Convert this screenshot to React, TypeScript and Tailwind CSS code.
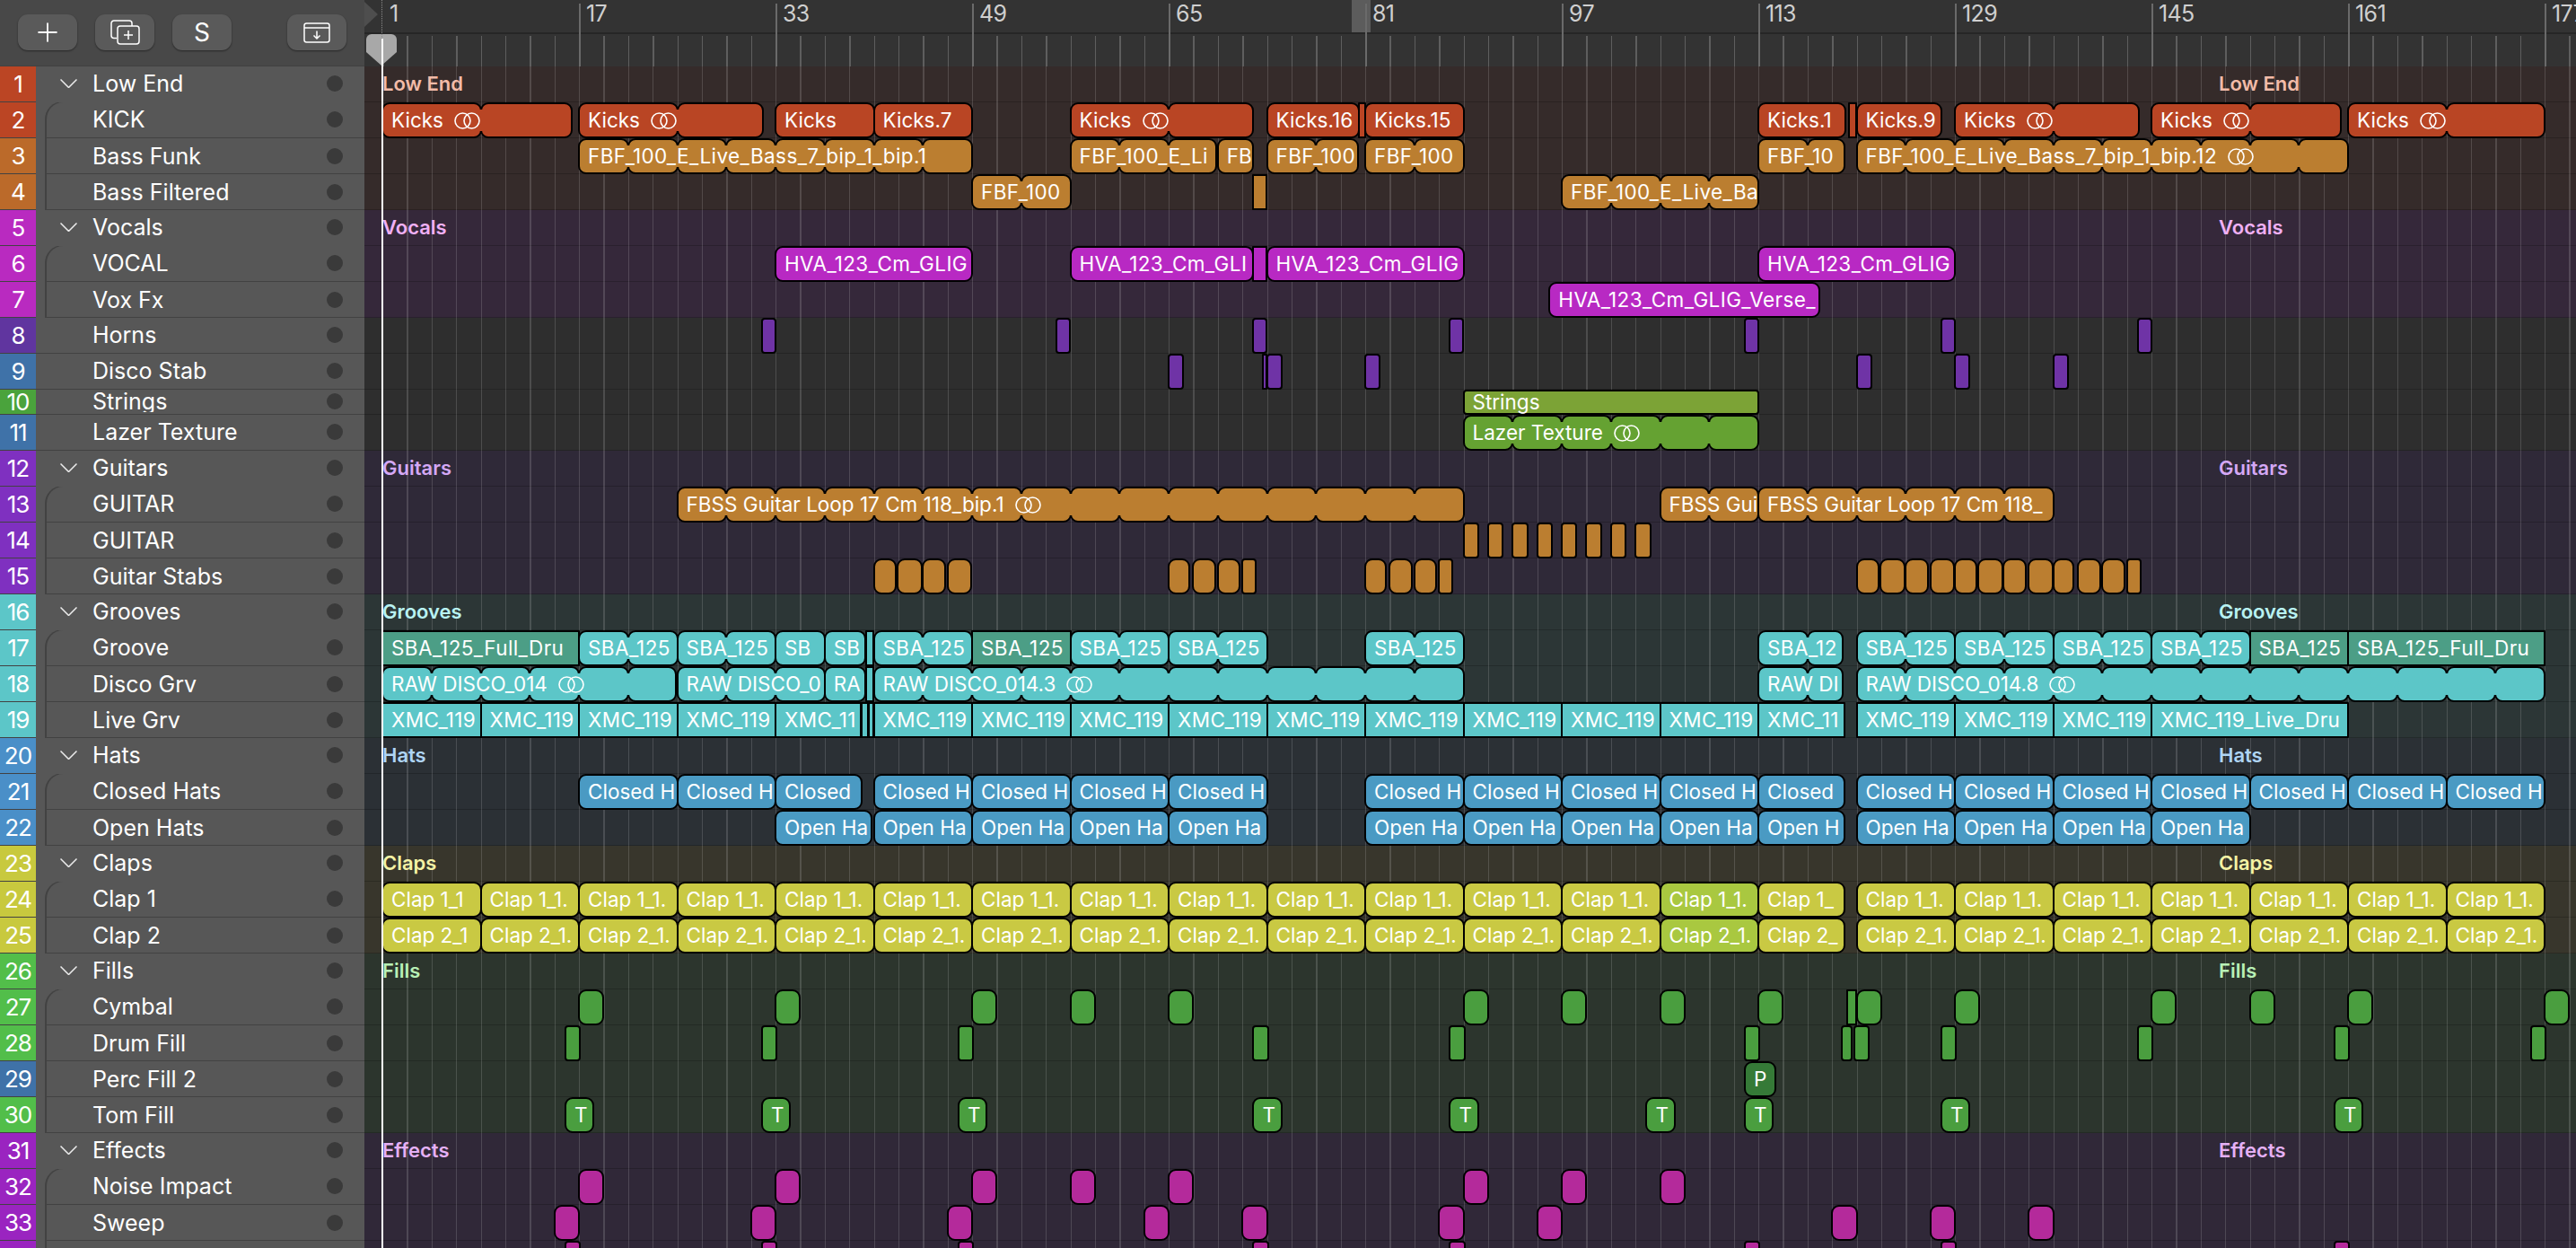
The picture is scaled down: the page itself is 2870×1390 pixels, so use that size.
import React from 'react'
import { Plus } from 'lucide-react'

const STEP = 27.375
// arrange area starts at x=406, bar 1 sits 20px in
const gx = (g: number) => 20 + g * STEP

type Kind = 'folder' | 'first' | 'child' | 'plain'
type Track = { n: number; name: string; cell: string; kind: Kind; bg: string; tint?: string; h?: string }

const LOW = 'bg-[#352b2a]'
const VOX = 'bg-[#35283a]'
const NEU = 'bg-[#2e2e2e]'
const GTR = 'bg-[#2f2938]'
const GRV = 'bg-[#2c3636]'
const HAT = 'bg-[#2b3035]'
const CLP = 'bg-[#38362c]'
const FIL = 'bg-[#2c352d]'
const FX = 'bg-[#302838]'

const tracks: Track[] = [
  { n: 1, name: 'Low End', cell: 'bg-[#bb4524]', kind: 'folder', bg: LOW, tint: 'text-[#f2bba8]' },
  { n: 2, name: 'KICK', cell: 'bg-[#bb4524]', kind: 'first', bg: LOW },
  { n: 3, name: 'Bass Funk', cell: 'bg-[#bb6a2a]', kind: 'child', bg: LOW },
  { n: 4, name: 'Bass Filtered', cell: 'bg-[#bb6a2a]', kind: 'child', bg: LOW },
  { n: 5, name: 'Vocals', cell: 'bg-[#b92ac0]', kind: 'folder', bg: VOX, tint: 'text-[#f0b0f5]' },
  { n: 6, name: 'VOCAL', cell: 'bg-[#b92ac0]', kind: 'first', bg: VOX },
  { n: 7, name: 'Vox Fx', cell: 'bg-[#b92ac0]', kind: 'child', bg: VOX },
  { n: 8, name: 'Horns', cell: 'bg-[#60359f]', kind: 'plain', bg: NEU },
  { n: 9, name: 'Disco Stab', cell: 'bg-[#3f72a8]', kind: 'plain', bg: NEU },
  { n: 10, name: 'Strings', cell: 'bg-[#4aa33c]', kind: 'plain', bg: NEU, h: 'h-[28px]' },
  { n: 11, name: 'Lazer Texture', cell: 'bg-[#3f72a8]', kind: 'plain', bg: NEU },
  { n: 12, name: 'Guitars', cell: 'bg-[#7f30c0]', kind: 'folder', bg: GTR, tint: 'text-[#d4a8f5]' },
  { n: 13, name: 'GUITAR', cell: 'bg-[#7f30c0]', kind: 'first', bg: GTR },
  { n: 14, name: 'GUITAR', cell: 'bg-[#7f30c0]', kind: 'child', bg: GTR },
  { n: 15, name: 'Guitar Stabs', cell: 'bg-[#7f30c0]', kind: 'child', bg: GTR },
  { n: 16, name: 'Grooves', cell: 'bg-[#5cc6c8]', kind: 'folder', bg: GRV, tint: 'text-[#b8f2f2]' },
  { n: 17, name: 'Groove', cell: 'bg-[#5cc6c8]', kind: 'first', bg: GRV },
  { n: 18, name: 'Disco Grv', cell: 'bg-[#5cc6c8]', kind: 'child', bg: GRV },
  { n: 19, name: 'Live Grv', cell: 'bg-[#5cc6c8]', kind: 'child', bg: GRV },
  { n: 20, name: 'Hats', cell: 'bg-[#4a8fc8]', kind: 'folder', bg: HAT, tint: 'text-[#afd5f5]' },
  { n: 21, name: 'Closed Hats', cell: 'bg-[#4a8fc8]', kind: 'first', bg: HAT },
  { n: 22, name: 'Open Hats', cell: 'bg-[#4a8fc8]', kind: 'child', bg: HAT },
  { n: 23, name: 'Claps', cell: 'bg-[#c8c93e]', kind: 'folder', bg: CLP, tint: 'text-[#f5f3a5]' },
  { n: 24, name: 'Clap 1', cell: 'bg-[#c8c93e]', kind: 'first', bg: CLP },
  { n: 25, name: 'Clap 2', cell: 'bg-[#c8c93e]', kind: 'child', bg: CLP },
  { n: 26, name: 'Fills', cell: 'bg-[#52be4a]', kind: 'folder', bg: FIL, tint: 'text-[#b8f0b5]' },
  { n: 27, name: 'Cymbal', cell: 'bg-[#52be4a]', kind: 'first', bg: FIL },
  { n: 28, name: 'Drum Fill', cell: 'bg-[#52be4a]', kind: 'child', bg: FIL },
  { n: 29, name: 'Perc Fill 2', cell: 'bg-[#3f72a8]', kind: 'child', bg: FIL },
  { n: 30, name: 'Tom Fill', cell: 'bg-[#52be4a]', kind: 'child', bg: FIL },
  { n: 31, name: 'Effects', cell: 'bg-[#9a24c0]', kind: 'folder', bg: FX, tint: 'text-[#e5b0f5]' },
  { n: 32, name: 'Noise Impact', cell: 'bg-[#9a24c0]', kind: 'first', bg: FX },
  { n: 33, name: 'Sweep', cell: 'bg-[#9a24c0]', kind: 'child', bg: FX },
  { n: 34, name: '', cell: 'bg-[#9a24c0]', kind: 'child', bg: FX },
]

type Clip = { s: number; e: number; text?: string; step?: number; color?: string; sq?: boolean; r?: string; loop?: boolean }

const c = (s: number, e: number, text?: string, o: Partial<Clip> = {}): Clip => ({ s, e, text, ...o })
const many = (starts: number[], w: number, text?: string, o: Partial<Clip> = {}) => starts.map((s) => c(s, s + w, text, o))
const sliver = (s: number, e: number, o: Partial<Clip> = {}) => c(s, e, undefined, { sq: true, ...o })

const DARK = 'bg-[#4c9e86]'
const LIME = 'bg-[#a9c840]'
const TINY = { r: 'rounded-[4px]' }

const clips: Record<number, { color: string; items: Clip[] }> = {
  2: {
    color: 'bg-[#b94524]',
    items: [
      c(0, 7.7, 'Kicks', { step: 4, loop: true }),
      c(8, 15.5, 'Kicks', { step: 4, loop: true }),
      c(16, 20, 'Kicks'), c(20, 24, 'Kicks.7'),
      c(28, 35.45, 'Kicks', { step: 4, loop: true }),
      c(36, 39.75, 'Kicks.16'), sliver(39.75, 40), c(40, 44, 'Kicks.15'),
      c(56, 59.55, 'Kicks.1'), sliver(59.7, 60), c(60, 63.45, 'Kicks.9'),
      c(64, 71.5, 'Kicks', { step: 4, loop: true }),
      c(72, 79.7, 'Kicks', { step: 4, loop: true }),
      c(80, 88, 'Kicks', { step: 4, loop: true }),
    ],
  },
  3: {
    color: 'bg-[#bb7e30]',
    items: [
      c(8, 24, 'FBF_100_E_Live_Bass_7_bip_1_bip.1', { step: 2 }),
      c(28, 33.95, 'FBF_100_E_Li', { step: 2 }),
      c(34, 35.45, 'FB'),
      c(36, 39.7, 'FBF_100', { step: 2 }),
      c(40, 44, 'FBF_100', { step: 2 }),
      c(56, 59.5, 'FBF_10', { step: 2 }),
      c(60, 80, 'FBF_100_E_Live_Bass_7_bip_1_bip.12', { step: 2, loop: true }),
    ],
  },
  4: {
    color: 'bg-[#bb7e30]',
    items: [
      c(24, 28, 'FBF_100', { step: 2 }),
      sliver(35.45, 36),
      c(48, 56, 'FBF_100_E_Live_Ba', { step: 2 }),
    ],
  },
  6: {
    color: 'bg-[#b829c3]',
    items: [
      c(16, 24, 'HVA_123_Cm_GLIG'),
      c(28, 35.45, 'HVA_123_Cm_GLI'),
      sliver(35.45, 36),
      c(36, 44, 'HVA_123_Cm_GLIG'),
      c(56, 64, 'HVA_123_Cm_GLIG'),
    ],
  },
  7: { color: 'bg-[#b829c3]', items: [c(47.5, 58.5, 'HVA_123_Cm_GLIG_Verse_')] },
  8: { color: 'bg-[#6f33a6]', items: many([15.45, 27.45, 35.45, 43.45, 55.45, 63.45, 71.45], 0.55, undefined, TINY) },
  9: {
    color: 'bg-[#6f33a6]',
    items: [sliver(35.85, 36), ...many([32, 36, 40, 60, 64, 68], 0.6, undefined, TINY)],
  },
  10: { color: 'bg-[#7ca336]', items: [c(44, 56, 'Strings', TINY)] },
  11: { color: 'bg-[#65a232]', items: [c(44, 56, 'Lazer Texture', { step: 2, loop: true })] },
  13: {
    color: 'bg-[#bb7e30]',
    items: [
      c(12, 44, 'FBSS Guitar Loop 17 Cm 118_bip.1', { step: 2, loop: true }),
      c(52, 56, 'FBSS Gui', { step: 2 }),
      c(56, 68, 'FBSS Guitar Loop 17 Cm 118_', { step: 2 }),
    ],
  },
  14: { color: 'bg-[#bb7e30]', items: many([44, 45, 46, 47, 48, 49, 50, 51], 0.6, undefined, TINY) },
  15: {
    color: 'bg-[#bb7e30]',
    items: [
      ...[20, 60, 64].flatMap((g) => [c(g, g + 0.88), c(g + 0.95, g + 1.94), c(g + 1.98, g + 2.9), c(g + 3, g + 3.98)]),
      ...[32, 40, 68].flatMap((g) => [c(g, g + 0.84), c(g + 1, g + 1.9), c(g + 2, g + 2.9), c(g + 3, g + 3.55, undefined, TINY)]),
    ],
  },
  17: {
    color: 'bg-[#5cc6c8]',
    items: [
      c(0, 8, 'SBA_125_Full_Dru', { color: DARK, sq: true }),
      c(8, 12, 'SBA_125', { step: 2 }),
      c(12, 16, 'SBA_125', { step: 2 }),
      c(16, 18, 'SB'),
      c(18, 19.65, 'SB'),
      sliver(19.7, 20),
      c(20, 24, 'SBA_125', { step: 2 }),
      c(24, 28, 'SBA_125', { color: DARK, sq: true }),
      c(28, 32, 'SBA_125', { step: 2 }),
      c(32, 36, 'SBA_125', { step: 2 }),
      c(40, 44, 'SBA_125', { step: 2 }),
      c(56, 59.45, 'SBA_12', { step: 2 }),
      c(60, 64, 'SBA_125', { step: 2 }),
      c(64, 68, 'SBA_125', { step: 2 }),
      c(68, 72, 'SBA_125', { step: 2 }),
      c(72, 76, 'SBA_125', { step: 2 }),
      c(76, 80, 'SBA_125', { color: DARK, sq: true }),
      c(80, 88, 'SBA_125_Full_Dru', { color: DARK, sq: true }),
    ],
  },
  18: {
    color: 'bg-[#5cc6c8]',
    items: [
      c(0, 11.95, 'RAW DISCO_014', { step: 2, loop: true }),
      c(12, 18, 'RAW DISCO_0', { step: 2 }),
      c(18, 19.65, 'RA'),
      sliver(19.7, 20),
      c(20, 44, 'RAW DISCO_014.3', { step: 2, loop: true }),
      c(56, 59.45, 'RAW DI', { step: 2 }),
      c(60, 88, 'RAW DISCO_014.8', { step: 2, loop: true }),
    ],
  },
  19: {
    color: 'bg-[#5cc6c8]',
    items: [
      ...many([0, 4, 8, 12], 4, 'XMC_119', { sq: true }),
      c(16, 19.46, 'XMC_11', { sq: true }),
      sliver(19.5, 19.75),
      sliver(19.8, 20),
      ...many([20, 24, 28, 32, 36, 40, 44, 48, 52], 4, 'XMC_119', { sq: true }),
      c(56, 59.5, 'XMC_11', { sq: true }),
      ...many([60, 64, 68], 4, 'XMC_119', { sq: true }),
      c(72, 80, 'XMC_119_Live_Dru', { sq: true }),
    ],
  },
  21: {
    color: 'bg-[#4a9ac3]',
    items: [
      ...many([8, 12], 4, 'Closed H'),
      c(16, 19.5, 'Closed'),
      ...many([20, 24, 28, 32, 40, 44, 48, 52], 4, 'Closed H'),
      c(56, 59.5, 'Closed'),
      ...many([60, 64, 68, 72, 76, 80, 84], 4, 'Closed H'),
    ],
  },
  22: {
    color: 'bg-[#4a9ac3]',
    items: [
      ...many([16, 20, 24, 28, 32, 40, 44, 48, 52], 4, 'Open Ha', {}).map((x) => (x.s === 16 ? { ...x, e: 19.9 } : x)),
      c(56, 59.5, 'Open H'),
      ...many([60, 64, 68, 72], 4, 'Open Ha'),
    ],
  },
  24: {
    color: 'bg-[#c9c943]',
    items: [
      c(0, 4, 'Clap 1_1'),
      ...many([4, 8, 12, 16, 20, 24, 28, 32, 36, 40, 44, 48], 4, 'Clap 1_1.'),
      c(52, 56, 'Clap 1_1.', { color: LIME }),
      c(56, 59.5, 'Clap 1_'),
      ...many([60, 64, 68, 72, 76, 80, 84], 4, 'Clap 1_1.'),
    ],
  },
  25: {
    color: 'bg-[#c9c943]',
    items: [
      c(0, 4, 'Clap 2_1'),
      ...many([4, 8, 12, 16, 20, 24, 28, 32, 36, 40, 44, 48], 4, 'Clap 2_1.'),
      c(52, 56, 'Clap 2_1.', { color: LIME }),
      c(56, 59.5, 'Clap 2_'),
      ...many([60, 64, 68, 72, 76, 80, 84], 4, 'Clap 2_1.'),
    ],
  },
  27: {
    color: 'bg-[#4a9e3f]',
    items: [sliver(59.6, 60), ...many([8, 16, 24, 28, 32, 44, 48, 52, 56, 60, 64, 72, 76, 80, 88], 1)],
  },
  28: {
    color: 'bg-[#4a9e3f]',
    items: [
      ...many([7.45, 15.45, 23.45, 35.45, 43.45, 55.45, 63.45, 71.45, 79.45, 87.45], 0.6, undefined, TINY),
      c(59.4, 59.8, undefined, TINY),
      c(59.9, 60.5, undefined, TINY),
    ],
  },
  29: { color: 'bg-[#357a37]', items: [c(55.45, 56.7, 'P')] },
  30: { color: 'bg-[#4a9e3f]', items: many([7.45, 15.45, 23.45, 35.45, 43.45, 51.45, 55.45, 63.45, 79.45], 1.15, 'T') },
  32: { color: 'bg-[#b42a9b]', items: many([8, 16, 24, 28, 32, 44, 48, 52], 1) },
  33: { color: 'bg-[#b42a9b]', items: many([7, 15, 23, 31, 35, 43, 47, 59, 63, 67], 1) },
  34: { color: 'bg-[#b42a9b]', items: many([7.45, 15.45, 23.45, 35.45, 43.45, 55.45, 63.45, 79.45], 0.6, undefined, TINY) },
}

function LoopIcon() {
  return (
    <svg width="29" height="19" viewBox="0 0 29 19" fill="none" stroke="white" strokeWidth="1.6" className="ml-[12px] shrink-0">
      <circle cx="9.5" cy="9.5" r="8.5" />
      <circle cx="19.5" cy="9.5" r="8.5" />
    </svg>
  )
}

function Region({ clip, color }: { clip: Clip; color: string }) {
  const bg = clip.color ?? color
  const radius = clip.r ?? (clip.sq ? 'rounded-[1px]' : 'rounded-[9px]')
  const step = clip.step ?? clip.e - clip.s
  const cuts: number[] = []
  for (let g = clip.s; g < clip.e - 0.001; g += step) cuts.push(g)
  const wide = clip.text && /^(FBF|HVA|SBA|XMC)/.test(clip.text)
  return (
    <div
      className="absolute top-0 bottom-[-1px] z-10 flex overflow-hidden"
      style={{ left: gx(clip.s) - 1, width: (clip.e - clip.s) * STEP + 2 }}
    >
      {cuts.map((g, i) => (
        <div
          key={i}
          className={`h-full shrink-0 border-2 border-black ${bg} ${radius} ${i > 0 ? 'ml-[-2px]' : ''}`}
          style={{ width: (Math.min(g + step, clip.e) - g) * STEP + 2 }}
        />
      ))}
      {/* loop repeats only notch the outline, no line runs through the clip */}
      {cuts.slice(1).map((g) => (
        <div key={g} className={`absolute top-[8px] bottom-[8px] w-[5px] ${bg}`} style={{ left: (g - clip.s) * STEP - 1.5 }} />
      ))}
      {clip.text && (
        <div className={`absolute inset-y-0 left-[11px] flex items-center text-[22.5px] text-white whitespace-nowrap ${wide ? 'tracking-[0.4px]' : ''}`}>
          <span>{clip.text}</span>
          {clip.loop && <LoopIcon />}
        </div>
      )}
    </div>
  )
}

function Name({ t }: { t: Track }) {
  if (t.n === 10) {
    return <span className="h-[24px] flex-1 overflow-hidden leading-[24px]">{t.name}</span>
  }
  return <span className="flex-1 leading-[30px]">{t.name}</span>
}

function Dot() {
  return <span className="h-[18px] w-[18px] shrink-0 rounded-full bg-[#3a3a3a]" />
}

function TrackHeader({ t }: { t: Track }) {
  const height = t.h ?? 'h-[40px]'
  return (
    <div className={`flex shrink-0 overflow-hidden ${height}`}>
      <div
        className={`flex w-[40px] shrink-0 items-center justify-center border-b-[1.5px] border-[#424242] text-[26px] leading-none tracking-[-1px] text-white ${t.cell}`}
      >
        {t.n < 34 ? t.n : null}
      </div>
      {t.kind === 'folder' && (
        <div className="flex flex-1 items-center pr-[24px] pb-[2px] text-[25px] text-white">
          <svg width="19" height="10" viewBox="0 0 19 10" fill="none" stroke="#ececec" strokeWidth="1.5" className="ml-[27px] mr-[17px] shrink-0">
            <polyline points="0.5,0.5 9.5,9.5 18.5,0.5" />
          </svg>
          <Name t={t} />
          <Dot />
        </div>
      )}
      {t.kind === 'plain' && (
        <div className="flex flex-1 items-center border-b-[1.5px] border-[#424242] pb-[1px] pl-[63px] pr-[24px] text-[25px] text-white">
          <Name t={t} />
          <Dot />
        </div>
      )}
      {t.kind === 'first' && (
        <div className="ml-[10px] mt-[-1.5px] flex h-[41.5px] flex-1 items-center rounded-tl-[20px] border-t-[1.5px] border-b-[1.5px] border-l-[2px] border-[#424242] pl-[51px] pr-[24px] text-[25px] text-white">
          <Name t={t} />
          <Dot />
        </div>
      )}
      {t.kind === 'child' && (
        <div className="ml-[10px] flex flex-1 items-center border-b-[1.5px] border-l-[2px] border-[#424242] pl-[51px] pr-[24px] text-[25px] text-white">
          <Name t={t} />
          <Dot />
        </div>
      )}
    </div>
  )
}

function ArrangeRow({ t }: { t: Track }) {
  const height = t.h ?? 'h-[40px]'
  const row = clips[t.n]
  return (
    <div className={`relative shrink-0 border-b-[1.5px] border-black/20 ${height} ${t.bg}`}>
      {t.tint && (
        <>
          <span className={`absolute left-[20px] top-[3px] z-10 text-[22px] font-semibold whitespace-nowrap ${t.tint}`}>{t.name}</span>
          <span className={`absolute left-[2066px] top-[3px] z-10 text-[22px] font-semibold whitespace-nowrap ${t.tint}`}>{t.name}</span>
        </>
      )}
      {row && row.items.map((clip, i) => <Region key={i} clip={clip} color={row.color} />)}
    </div>
  )
}

function ToolButton({ children, className = '' }: { children: React.ReactNode; className?: string }) {
  return (
    <button className={`flex h-[40px] w-[66px] items-center justify-center rounded-[11px] bg-[#5a5a5a] text-white shadow-[0_1px_2px_rgba(0,0,0,0.45)] ${className}`}>
      {children}
    </button>
  )
}

function Ruler() {
  const bars = [1, 17, 33, 49, 65, 81, 97, 113, 129, 145, 161, 177]
  const ticks = Array.from({ length: 90 }, (_, i) => i)
  return (
    <div className="relative h-[74px] shrink-0 overflow-hidden bg-[#333333]">
      <div className="absolute inset-x-0 top-[36px] h-[2px] bg-[#262626]" />
      <div className="absolute left-[1100px] top-0 h-[36px] w-[21px] bg-[#5c5c5c]" />
      {ticks.map((i) => (
        <div key={i} className="absolute bottom-0 top-[40px] w-[1.5px] bg-[#5e5e5e]" style={{ left: gx(i) }} />
      ))}
      {bars.map((b, i) => (
        <React.Fragment key={b}>
          {i > 0 && <div className="absolute bottom-0 top-[4px] w-[1.5px] bg-[#6a6a6a]" style={{ left: gx(i * 8) }} />}
          <span className="absolute top-0 text-[25px] leading-[30px] tracking-tight text-[#cfcfcf]" style={{ left: gx(i * 8) + 8 }}>
            {b}
          </span>
        </React.Fragment>
      ))}
      <svg width="15" height="28" viewBox="0 0 15 28" className="absolute left-0 top-[2px]">
        <polygon points="0,0 15,14 0,28" fill="#4e4e4e" />
      </svg>
    </div>
  )
}

export default function App() {
  const lines = Array.from({ length: 90 }, (_, i) => i)
  return (
    <div className="flex h-[1390px] w-[2870px] overflow-hidden bg-[#2e2e2e] font-[family-name:Inter,sans-serif]">
      {/* track list */}
      <div className="flex w-[406px] shrink-0 flex-col bg-[#575757]">
        <div className="flex h-[74px] shrink-0 gap-[20px] border-b-[1.5px] border-[#414141] bg-[#484848] pl-[20px] pr-[20px] pt-[16px]">
          <ToolButton>
            <Plus size={34} strokeWidth={1.25} />
          </ToolButton>
          <ToolButton>
            <svg width="33" height="28" viewBox="0 0 33 28" fill="none" stroke="white" strokeWidth="1.5">
              <path d="M7 20.5H4a3 3 0 0 1-3-3V4a3 3 0 0 1 3-3h17a3 3 0 0 1 3 3v3" />
              <rect x="8" y="7" width="24" height="20" rx="3" />
              <path d="M20 12v10M15 17h10" />
            </svg>
          </ToolButton>
          <ToolButton>
            <span className="text-[28px] leading-none">S</span>
          </ToolButton>
          <ToolButton className="ml-auto">
            <svg width="30" height="23" viewBox="0 0 30 23" fill="none" stroke="white" strokeWidth="1.5">
              <rect x="1" y="1" width="28" height="21" rx="2.5" />
              <path d="M1 6h28" />
              <path d="M15 9.5v8M11.5 14.5l3.5 3.5 3.5-3.5" />
            </svg>
          </ToolButton>
        </div>
        {tracks.map((t) => (
          <TrackHeader key={t.n} t={t} />
        ))}
      </div>

      {/* arrange */}
      <div className="relative flex flex-1 flex-col">
        <Ruler />
        {tracks.map((t) => (
          <ArrangeRow key={t.n} t={t} />
        ))}
        {/* bar grid */}
        <div className="absolute inset-x-0 bottom-0 top-[74px] z-[1]">
          {lines.map((i) => (
            <div key={i} className="absolute inset-y-0 w-[1.3px] bg-white/15" style={{ left: gx(i) }} />
          ))}
        </div>
        {/* playhead */}
        <div className="absolute bottom-0 left-[18.5px] top-[43px] z-20 w-[2px] bg-white" />
        <div className="absolute left-[19px] top-0 z-20 h-[43px] w-0 border-l-[1.5px] border-dotted border-[#8a8a8a]" />
        <svg width="34" height="35" viewBox="0 0 34 35" className="absolute left-[2px] top-[38px] z-[15]">
          <path d="M6 0h22a6 6 0 0 1 6 6v14L17 35 0 20V6a6 6 0 0 1 6-6z" fill="#a8a8a8" />
        </svg>
      </div>
    </div>
  )
}
